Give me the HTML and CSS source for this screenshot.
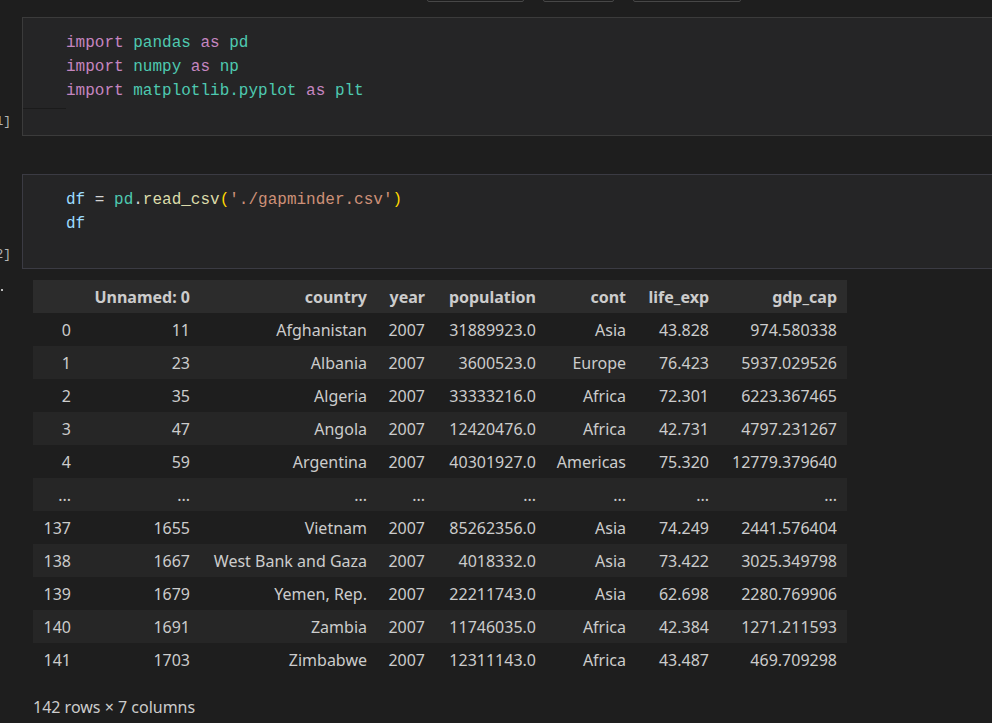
FILE: index.html
```html
<!DOCTYPE html>
<html>
<head>
<meta charset="utf-8">
<link rel="stylesheet" href="styles.css">
</head>
<body>
<div class="toolbar">
  <span class="tb-btn tb-1"></span>
  <span class="tb-btn tb-2"></span>
  <span class="tb-btn tb-3"></span>
</div>

<div class="cell cell-first">
  <div class="gutter"><span class="count">[1]</span></div>
  <div class="box box-first">
    <div class="code">
      <div class="line"><span class="kw">import</span> <span class="mod">pandas</span> <span class="kw">as</span> <span class="mod">pd</span></div>
      <div class="line"><span class="kw">import</span> <span class="mod">numpy</span> <span class="kw">as</span> <span class="mod">np</span></div>
      <div class="line"><span class="kw">import</span> <span class="mod">matplotlib.pyplot</span> <span class="kw">as</span> <span class="mod">plt</span></div>
    </div>
    <div class="marker"></div>
  </div>
</div>

<div class="cell cell-second">
  <div class="gutter"><span class="count">[2]</span></div>
  <div class="box box-second">
    <div class="code">
      <div class="line"><span class="var">df</span> <span class="op">=</span> <span class="mod">pd</span><span class="op">.</span><span class="fn">read_csv</span><span class="br">(</span><span class="str">'./gapminder.csv'</span><span class="br">)</span></div>
      <div class="line"><span class="var">df</span></div>
    </div>
  </div>
</div>

<div class="output">
  <div class="out-gutter"><span class="dot"></span></div>
  <div class="out-content">
    <table class="df">
      <colgroup>
        <col class="c-idx"><col class="c-unn"><col class="c-cty"><col class="c-yr"><col class="c-pop"><col class="c-cont"><col class="c-life"><col class="c-gdp">
      </colgroup>
      <thead>
        <tr><th></th><th>Unnamed: 0</th><th>country</th><th>year</th><th>population</th><th>cont</th><th>life_exp</th><th>gdp_cap</th></tr>
      </thead>
      <tbody>
        <tr><th>0</th><td>11</td><td>Afghanistan</td><td>2007</td><td>31889923.0</td><td>Asia</td><td>43.828</td><td>974.580338</td></tr>
        <tr><th>1</th><td>23</td><td>Albania</td><td>2007</td><td>3600523.0</td><td>Europe</td><td>76.423</td><td>5937.029526</td></tr>
        <tr><th>2</th><td>35</td><td>Algeria</td><td>2007</td><td>33333216.0</td><td>Africa</td><td>72.301</td><td>6223.367465</td></tr>
        <tr><th>3</th><td>47</td><td>Angola</td><td>2007</td><td>12420476.0</td><td>Africa</td><td>42.731</td><td>4797.231267</td></tr>
        <tr><th>4</th><td>59</td><td>Argentina</td><td>2007</td><td>40301927.0</td><td>Americas</td><td>75.320</td><td>12779.379640</td></tr>
        <tr class="ellipsis"><th>...</th><td>...</td><td>...</td><td>...</td><td>...</td><td>...</td><td>...</td><td>...</td></tr>
        <tr><th>137</th><td>1655</td><td>Vietnam</td><td>2007</td><td>85262356.0</td><td>Asia</td><td>74.249</td><td>2441.576404</td></tr>
        <tr><th>138</th><td>1667</td><td>West Bank and Gaza</td><td>2007</td><td>4018332.0</td><td>Asia</td><td>73.422</td><td>3025.349798</td></tr>
        <tr><th>139</th><td>1679</td><td>Yemen, Rep.</td><td>2007</td><td>22211743.0</td><td>Asia</td><td>62.698</td><td>2280.769906</td></tr>
        <tr><th>140</th><td>1691</td><td>Zambia</td><td>2007</td><td>11746035.0</td><td>Africa</td><td>42.384</td><td>1271.211593</td></tr>
        <tr><th>141</th><td>1703</td><td>Zimbabwe</td><td>2007</td><td>12311143.0</td><td>Africa</td><td>43.487</td><td>469.709298</td></tr>
      </tbody>
    </table>
    <p class="shape">142 rows × 7 columns</p>
  </div>
</div>
</body>
</html>
```

FILE: styles.css
```css
html, body {
  margin: 0;
  padding: 0;
  background: #1e1e1e;
  overflow: hidden;
}
body {
  width: 992px;
  height: 723px;
  font-family: "Noto Sans", "Open Sans", sans-serif;
  color: #cccccc;
}

/* top toolbar, mostly scrolled out of view */
.toolbar {
  display: flex;
  align-items: flex-end;
  gap: 19px;
  height: 2px;
  overflow: hidden;
  padding-left: 427px;
}
.tb-btn {
  display: block;
  flex: none;
  height: 26px;
  box-sizing: border-box;
  border: 1px solid #474747;
  border-radius: 2px;
}
.tb-1 { width: 97px; }
.tb-2 { width: 71px; }
.tb-3 { width: 108px; }

/* cells */
.cell {
  display: flex;
  margin-right: -40px;
}
.cell-first { margin-top: 15px; }
.cell-second { margin-top: 38px; }

.gutter {
  width: 22px;
  flex: none;
  box-sizing: border-box;
  display: flex;
  align-items: flex-end;
  justify-content: flex-end;
  padding-right: 11px;
  padding-bottom: 6px;
}
.count {
  flex: none;
  font-family: "Liberation Mono", "DejaVu Sans Mono", monospace;
  font-size: 13px;
  line-height: 16px;
  color: #b4b4b4;
  white-space: nowrap;
}

.box {
  flex: 1;
  background: #252526;
  border: 1px solid #3b3b3b;
}
.box-first { padding: 13px 0 26px; }
.box-second { padding: 13px 0 32px; border-color: #3b3b43; }

.code {
  padding-left: 43px;
  font-family: "Liberation Mono", "DejaVu Sans Mono", monospace;
  font-size: 16px;
  line-height: 24px;
  color: #d4d4d4;
}
.line {
  height: 24px;
  white-space: pre;
}
.marker {
  margin-top: 5px;
  width: 43px;
  height: 1px;
  background: #1b1b1b;
}

.kw { color: #c586c0; }
.mod { color: #4ec9b0; }
.var { color: #9cdcfe; }
.op { color: #d4d4d4; }
.fn { color: #dcdcaa; }
.br { color: #ffd700; }
.str { color: #ce9178; }

/* output */
.output {
  display: flex;
  margin-top: 11px;
}
.out-gutter {
  width: 22px;
  flex: none;
  padding-top: 9px;
  box-sizing: border-box;
}
.dot {
  display: block;
  margin-left: 1px;
  width: 2px;
  height: 2px;
  background: #bdbdbd;
}
.out-content {
  padding-left: 11px;
}

.df {
  border-collapse: collapse;
  border-spacing: 0;
  table-layout: fixed;
  width: 814px;
  font-size: 16px;
  line-height: 20px;
}
.c-idx { width: 48px; }
.c-unn { width: 119px; }
.c-cty { width: 177px; }
.c-yr { width: 58px; }
.c-pop { width: 111px; }
.c-cont { width: 90px; }
.c-life { width: 83px; }
.c-gdp { width: 128px; }

.df tr { height: 33px; }
.df th, .df td {
  padding: 0 10px;
  text-align: right;
  vertical-align: middle;
  white-space: nowrap;
  color: #cccccc;
}
.df thead th {
  font-weight: 700;
  background: #2c2c2c;
}
.df tbody th { font-weight: 400; }
.df tbody tr:nth-child(even) { background: #262626; }

.shape {
  margin: 21px 0 0;
  font-size: 16px;
  line-height: 20px;
  color: #cccccc;
}
```
